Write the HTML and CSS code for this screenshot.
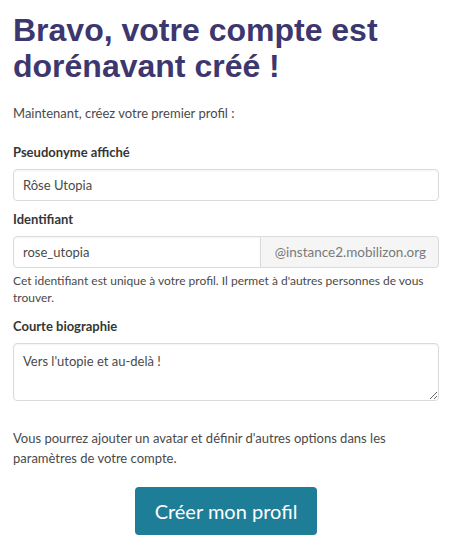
FILE: index.html
```html
<!DOCTYPE html>
<html lang="fr">

<head>
    <meta charset="UTF-8">
    <meta name="viewport" content="width=device-width, initial-scale=1.0">
    <title>Créer mon profil</title>
    <link rel="stylesheet" href="styles.css">
</head>

<body>
    <div class="page">
        <h1 class="title">Bravo, votre compte est dorénavant créé !</h1>
        <p class="intro">Maintenant, créez votre premier profil :</p>

        <form class="form">
            <div class="field">
                <label class="label" for="name">Pseudonyme affiché</label>
                <input class="input" id="name" type="text" value="Rôse Utopia">
            </div>

            <div class="field">
                <label class="label" for="username">Identifiant</label>
                <div class="addons">
                    <input class="input" id="username" type="text" value="rose_utopia">
                    <span class="addon">@instance2.mobilizon.org</span>
                </div>
                <p class="help">Cet identifiant est unique à votre profil. Il permet à d'autres personnes de vous trouver.</p>
            </div>

            <div class="field">
                <label class="label" for="bio">Courte biographie</label>
                <textarea class="textarea" id="bio">Vers l'utopie et au-delà !</textarea>
            </div>

            <p class="note">Vous pourrez ajouter un avatar et définir d'autres options dans les paramètres de votre compte.</p>

            <div class="actions">
                <button class="button" type="button">Créer mon profil</button>
            </div>
        </form>
    </div>
</body>

</html>
```

FILE: styles.css
```css
body {
    margin: 0;
    font-family: "Lato", "Noto Sans", sans-serif;
    color: #4a4a4a;
    background: #fff;
}

.page {
    padding: 0 12px 0 13px;
}

.title {
    margin: 0;
    padding-top: 12px;
    font-family: "Liberation Sans", Arial, sans-serif;
    font-size: 32px;
    line-height: 36px;
    font-weight: bold;
    color: #3c376e;
}

.intro {
    margin: 20px 0 0;
    font-size: 13px;
    line-height: 18px;
}

.form {
    margin-top: 21px;
}

.field {
    margin-bottom: 9px;
}

.label {
    display: block;
    margin-bottom: 8px;
    font-size: 13px;
    line-height: 18px;
    font-weight: bold;
    color: #363636;
}

.input,
.textarea {
    box-sizing: border-box;
    width: 100%;
    font-family: inherit;
    font-size: 13px;
    color: #4a4a4a;
    border: 1px solid #dbdbdb;
    border-radius: 4px;
    box-shadow: inset 0 1px 2px rgba(10, 10, 10, 0.05);
    background: #fff;
}

.input {
    height: 32px;
    padding: 0 9px;
}

.addons {
    display: flex;
}

.addons .input {
    flex: 1;
    min-width: 0;
    border-radius: 4px 0 0 4px;
}

.addon {
    display: flex;
    align-items: center;
    justify-content: flex-end;
    flex: none;
    width: 178px;
    height: 32px;
    box-sizing: border-box;
    padding: 0 12px 0 0;
    font-size: 13.5px;
    color: #7a7a7a;
    background: #f5f5f5;
    border: 1px solid #dbdbdb;
    border-left: none;
    border-radius: 0 4px 4px 0;
}

.help {
    margin: 4px 0 0;
    padding-bottom: 2px;
    font-size: 12px;
    line-height: 17px;
}

.textarea {
    display: block;
    height: 58px;
    padding: 8px 9px;
    line-height: 18px;
    resize: vertical;
}

.note {
    margin: 27px 0 0;
    font-size: 13px;
    line-height: 20px;
}

.actions {
    display: flex;
    justify-content: center;
    margin-top: 19px;
}

.button {
    width: 182px;
    height: 48px;
    font-family: inherit;
    font-size: 20px;
    color: #fff;
    background: #1e7d97;
    border: none;
    border-radius: 4px;
}
```
